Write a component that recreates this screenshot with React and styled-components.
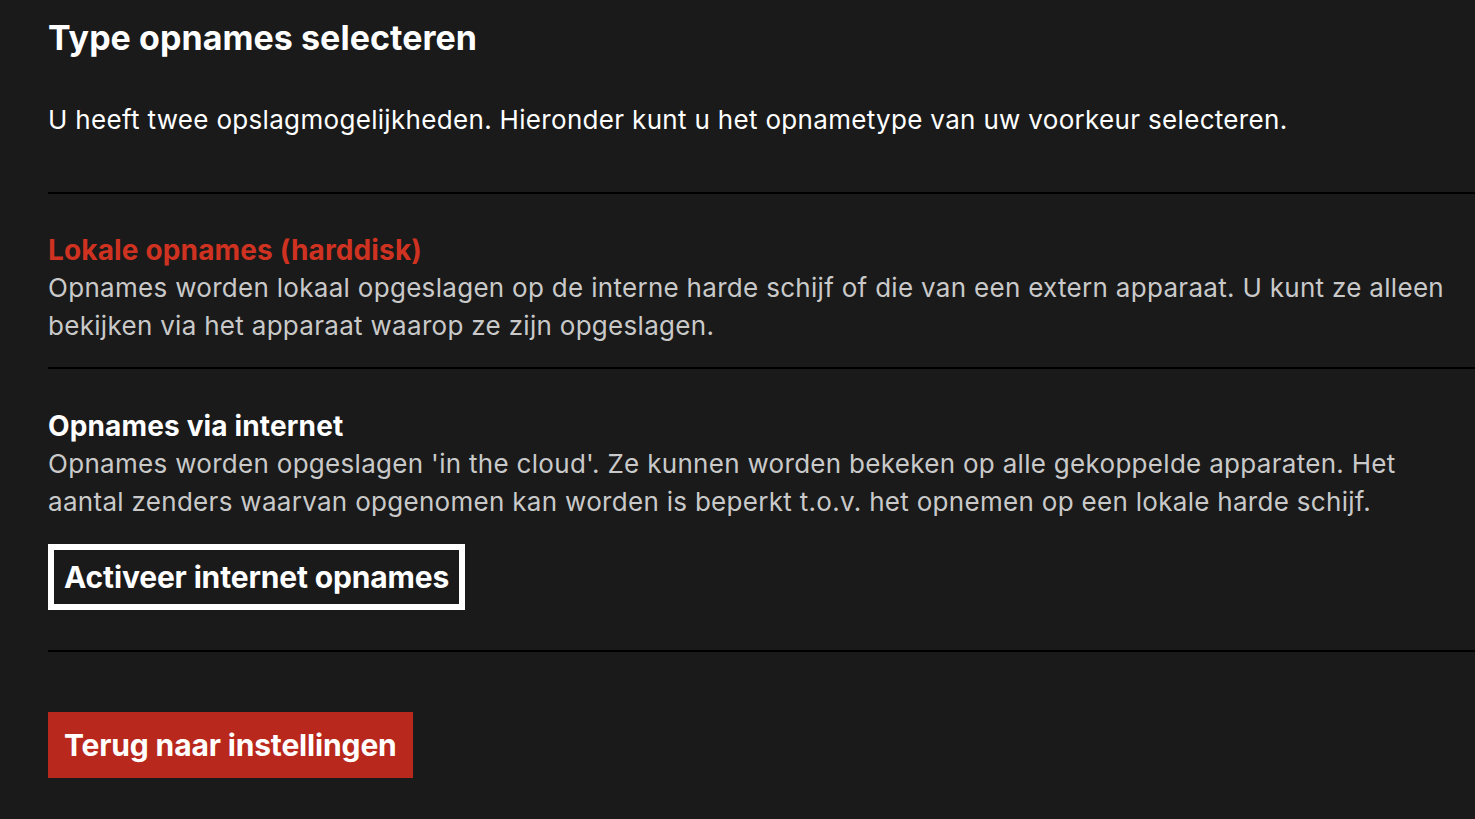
import React from "react";
import styled, { createGlobalStyle } from "styled-components";

const Global = createGlobalStyle`
  html, body { margin: 0; padding: 0; background: #1a1a1a; }
  body { font-family: Inter, "Noto Sans", sans-serif; -webkit-font-smoothing: antialiased; }
`;

const Page = styled.main`
  min-height: 819px;
  box-sizing: border-box;
  padding: 18px 0 0 48px;
  background: #1a1a1a;
  color: #fff;
`;

const Title = styled.h1`
  margin: 0;
  font-size: 34px;
  line-height: 40px;
  font-weight: 700;
  letter-spacing: 0.05px;
`;

const Intro = styled.p`
  margin: 43px 0 0;
  font-size: 26px;
  line-height: 38px;
  font-weight: 400;
  letter-spacing: 0.32px;
  color: #fff;
`;

const Divider = styled.hr`
  margin: ${(p) => p.$top}px 0 0;
  border: 0;
  height: 2px;
  background: #000;
`;

const Section = styled.section`
  padding: ${(p) => p.$top}px 24px 0 0;
`;

const OptionTitle = styled.h2`
  margin: 0;
  font-size: 28px;
  line-height: 38px;
  font-weight: 700;
  letter-spacing: 0.15px;
  color: ${(p) => (p.$active ? "#cf3220" : "#fff")};
`;

const Description = styled.p`
  margin: 0;
  font-size: 26px;
  line-height: 38px;
  font-weight: 400;
  letter-spacing: 0.3px;
  color: #c9c9c9;
`;

const ButtonBase = styled.button`
  display: inline-flex;
  align-items: center;
  height: 66px;
  box-sizing: border-box;
  font-family: inherit;
  font-size: 30px;
  font-weight: 700;
  letter-spacing: -0.15px;
  color: #fff;
  cursor: pointer;
`;

const OutlineButton = styled(ButtonBase)`
  margin-top: 23px;
  padding: 0 10px;
  border: 6px solid #fff;
  background: transparent;
`;

const Footer = styled.div`
  padding-top: 60px;
`;

const PrimaryButton = styled(ButtonBase)`
  padding: 0 16px;
  border: 0;
  background: #b9281c;
`;

export default function App() {
  return (
    <>
      <Global />
      <Page>
        <Title>Type opnames selecteren</Title>
        <Intro>
          U heeft twee opslagmogelijkheden. Hieronder kunt u het opnametype van uw voorkeur selecteren.
        </Intro>
        <Divider $top={53} />
        <Section $top={37}>
          <OptionTitle $active>Lokale opnames (harddisk)</OptionTitle>
          <Description>
            Opnames worden lokaal opgeslagen op de interne harde schijf of die van een extern apparaat. U kunt ze alleen bekijken via het apparaat waarop ze zijn opgeslagen.
          </Description>
        </Section>
        <Divider $top={22} />
        <Section $top={38}>
          <OptionTitle>Opnames via internet</OptionTitle>
          <Description>
            Opnames worden opgeslagen 'in the cloud'. Ze kunnen worden bekeken op alle gekoppelde apparaten. Het aantal zenders waarvan opgenomen kan worden is beperkt t.o.v. het opnemen op een lokale harde schijf.
          </Description>
          <OutlineButton>Activeer internet opnames</OutlineButton>
        </Section>
        <Divider $top={40} />
        <Footer>
          <PrimaryButton>Terug naar instellingen</PrimaryButton>
        </Footer>
      </Page>
    </>
  );
}
